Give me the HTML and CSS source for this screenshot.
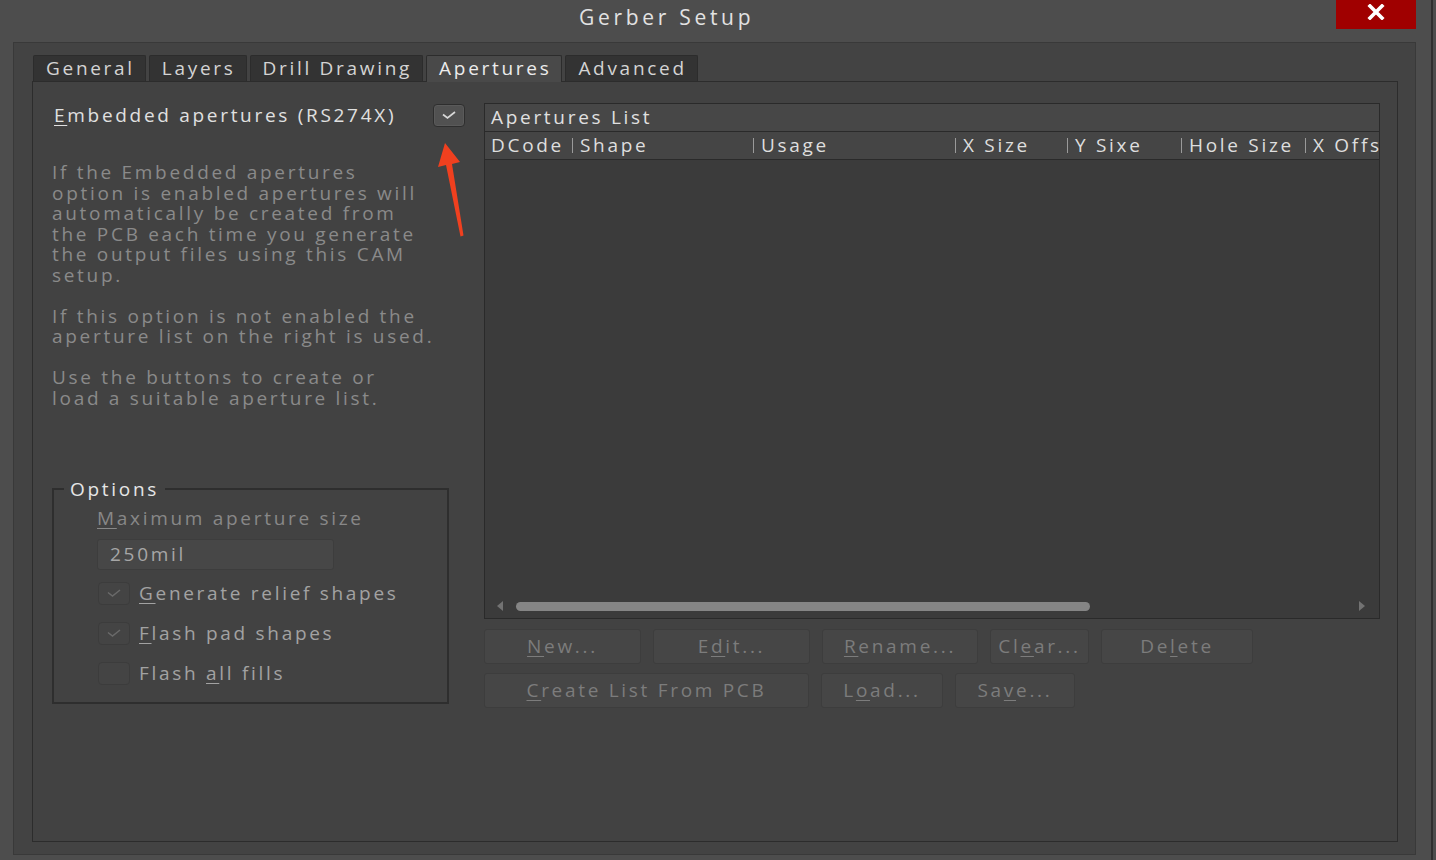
FILE: index.html
```html
<!DOCTYPE html>
<html>
<head>
<meta charset="utf-8">
<title>Gerber Setup</title>
<link rel="stylesheet" href="styles.css">
</head>
<body>
<div class="window">
  <div class="titlebar">
    <span class="title">Gerber Setup</span>
    <button class="close" aria-label="Close">
      <svg width="18" height="16" viewBox="0 0 18 16"><path d="M3 2 L15 14 M15 2 L3 14" stroke="#ffffff" stroke-width="3.6" stroke-linecap="square"/></svg>
    </button>
  </div>
  <div class="frame">
    <div class="tabs">
      <div class="tab">General</div>
      <div class="tab">Layers</div>
      <div class="tab">Drill Drawing</div>
      <div class="tab active">Apertures</div>
      <div class="tab">Advanced</div>
    </div>
    <div class="page">
      <div class="left">
        <div class="embed-row">
          <span class="embed-label"><u>E</u>mbedded apertures (RS274X)</span>
          <span class="check big"><svg width="16" height="10" viewBox="0 0 16 10"><path d="M2 4.5 L6.5 8 L14 2" fill="none" stroke="#d8d8d8" stroke-width="1.7"/></svg></span>
        </div>
        <div class="desc">
          <p>If the Embedded apertures<br>option is enabled apertures will<br>automatically be created from<br>the PCB each time you generate<br>the output files using this CAM<br>setup.</p>
          <p>If this option is not enabled the<br>aperture list on the right is used.</p>
          <p>Use the buttons to create or<br>load a suitable aperture list.</p>
        </div>
        <fieldset class="options">
          <legend>Options</legend>
          <div class="opt-label"><u>M</u>aximum aperture size</div>
          <div class="input">250mil</div>
          <div class="opt-row first">
            <span class="check"><svg width="16" height="10" viewBox="0 0 16 10"><path d="M2 4.5 L6.5 8 L14 2" fill="none" stroke="#6a6a6a" stroke-width="1.5"/></svg></span>
            <span class="opt-text"><u>G</u>enerate relief shapes</span>
          </div>
          <div class="opt-row">
            <span class="check"><svg width="16" height="10" viewBox="0 0 16 10"><path d="M2 4.5 L6.5 8 L14 2" fill="none" stroke="#6a6a6a" stroke-width="1.5"/></svg></span>
            <span class="opt-text"><u>F</u>lash pad shapes</span>
          </div>
          <div class="opt-row">
            <span class="check"></span>
            <span class="opt-text">Flash <u>a</u>ll fills</span>
          </div>
        </fieldset>
      </div>
      <div class="right">
        <div class="list">
          <div class="list-title">Apertures List</div>
          <div class="cols">
            <div class="col c-dcode">DCode</div>
            <div class="col sep c-shape">Shape</div>
            <div class="col sep c-usage">Usage</div>
            <div class="col sep c-xs">X Size</div>
            <div class="col sep c-ys">Y Sixe</div>
            <div class="col sep c-hole">Hole Size</div>
            <div class="col sep c-xo">X Offs</div>
          </div>
          <div class="list-body"></div>
          <div class="hscroll">
            <span class="arrow-l"></span>
            <div class="track"><div class="thumb"></div></div>
            <span class="arrow-r"></span>
          </div>
        </div>
        <div class="btn-row">
          <div class="btn b-new"><u>N</u>ew...</div>
          <div class="btn b-edit">E<u>d</u>it...</div>
          <div class="btn b-rename"><u>R</u>ename...</div>
          <div class="btn b-clear">Cl<u>e</u>ar...</div>
          <div class="btn b-delete">De<u>l</u>ete</div>
        </div>
        <div class="btn-row">
          <div class="btn b-create"><u>C</u>reate List From PCB</div>
          <div class="btn b-load">L<u>o</u>ad...</div>
          <div class="btn b-save">Sa<u>v</u>e...</div>
        </div>
      </div>
    </div>
  </div>
</div>
<svg class="annot" width="1436" height="860" viewBox="0 0 1436 860">
  <polygon points="445,143 438,167 446,165 460.5,236.5 463.5,235.5 452,164 460,162" fill="#f0401f"/>
</svg>
</body>
</html>
```
FILE: styles.css
```css
* { box-sizing: border-box; }
html, body { margin: 0; padding: 0; }
body {
  width: 1436px;
  height: 860px;
  overflow: hidden;
  background: #4d4d4d;
  font-family: "Open Sans", "DejaVu Sans", sans-serif;
  font-size: 19px;
  letter-spacing: 2.7px;
  position: relative;
}
u { text-decoration-thickness: 1px; text-underline-offset: 3px; }
.window {
  width: 1433px;
  height: 860px;
  border-right: 2px solid #2f2f2f;
  display: flex;
  flex-direction: column;
}
.titlebar {
  height: 42px;
  display: flex;
  align-items: flex-start;
  flex: none;
}
.title {
  margin-left: 579px;
  margin-top: 2px;
  color: #e2e2e2;
  font-size: 21px;
  letter-spacing: 3.7px;
  line-height: 30px;
}
.close {
  margin-left: auto;
  margin-right: 15px;
  width: 80px;
  height: 29px;
  background: #a00000;
  border: none;
  padding: 0;
  display: flex;
  align-items: center;
  justify-content: center;
  padding-bottom: 5px;
}
.frame {
  margin: 0 15px 0 13px;
  height: 813px;
  background: #434343;
  border: 1px solid #393939;
  padding: 12px 17px 12px 18px;
  display: flex;
  flex-direction: column;
}
.tabs {
  display: flex;
  gap: 3px;
  padding-left: 1px;
  height: 26px;
  flex: none;
}
.tab {
  height: 26px;
  background: #333333;
  color: #d4d4d4;
  border: 1px solid #2c2c2c;
  border-bottom: none;
  border-radius: 2px 2px 0 0;
  padding: 0 10px 0 12px;
  line-height: 24px;
  white-space: nowrap;
}
.tab.active {
  background: #494949;
  color: #ececec;
  height: 27px;
  margin-bottom: -1px;
  position: relative;
  z-index: 1;
}
.page {
  flex: 1;
  background: #424242;
  border: 1px solid #2c2c2c;
  display: flex;
  padding: 20px 17px 0 19px;
  gap: 18px;
  min-height: 0;
}
.left {
  width: 414px;
  flex: none;
  display: flex;
  flex-direction: column;
}
.embed-row {
  display: flex;
  align-items: center;
  height: 24px;
  margin-top: 1px;
}
.embed-label {
  color: #e0e0e0;
  padding-left: 2px;
  white-space: nowrap;
}
.check {
  width: 32px;
  height: 23px;
  border-radius: 4px;
  background: #444444;
  border: 1px solid #3c3c3c;
  display: flex;
  align-items: center;
  justify-content: center;
  flex: none;
}
.check.big {
  margin-left: auto;
  margin-right: 1px;
  background: #515151;
  border: 1px solid #2e2e2e;
  box-shadow: inset 0 0 0 1px #5a5a5a;
}
.desc {
  margin-top: 35px;
  color: #8a8a8a;
  line-height: 20.5px;
  white-space: nowrap;
}
.desc p { margin: 0 0 20.5px 0; }
.options {
  margin: 49px 0 0 0;
  width: 397px;
  height: 226px;
  border: 2px solid #2e2e2e;
  padding: 0 10px 0 43px;
}
.options legend {
  color: #e6e6e6;
  padding: 0 6px;
  margin-left: -33px;
  line-height: 22px;
}
.opt-label {
  color: #888888;
  line-height: 24px;
  margin-top: 6px;
  white-space: nowrap;
}
.input {
  margin-top: 9px;
  width: 237px;
  height: 31px;
  background: #474747;
  border: 1px solid #3d3d3d;
  border-radius: 3px;
  color: #a6a6a6;
  padding-left: 12px;
  line-height: 29px;
}
.opt-row {
  display: flex;
  align-items: center;
  gap: 9px;
  height: 23px;
  margin-top: 17px;
}
.opt-row.first { margin-top: 12px; }
.opt-row .check { margin-left: 1px; }
.opt-text { color: #a2a2a2; white-space: nowrap; }
.right {
  flex: 1;
  min-width: 0;
  display: flex;
  flex-direction: column;
  gap: 9px;
}
.list {
  height: 516px;
  border: 1px solid #2a2a2a;
  background: #3b3b3b;
  display: flex;
  flex-direction: column;
  margin-top: 1px;
  margin-bottom: 1px;
  overflow: hidden;
}
.list-title {
  height: 28px;
  background: #474747;
  border-bottom: 1px solid #2a2a2a;
  color: #e0e0e0;
  padding-left: 6px;
  line-height: 27px;
  flex: none;
}
.cols {
  height: 28px;
  background: #454545;
  border-bottom: 1px solid #2a2a2a;
  display: flex;
  overflow: hidden;
  color: #dedede;
  line-height: 27px;
  flex: none;
}
.col {
  flex: none;
  display: flex;
  align-items: center;
  white-space: nowrap;
}
.col.sep::before {
  content: "";
  width: 1px;
  height: 15px;
  background: #9a9a9a;
  margin-right: 7px;
}
.c-dcode { width: 87px; padding-left: 6px; }
.c-shape { width: 181px; }
.c-usage { width: 202px; }
.c-xs { width: 112px; }
.c-ys { width: 114px; }
.c-hole { width: 124px; }
.c-xo { width: 120px; }
.list-body { flex: 1; }
.hscroll {
  height: 20px;
  display: flex;
  align-items: center;
  padding: 0 14px 4px 12px;
  flex: none;
}
.arrow-l {
  width: 0; height: 0;
  border-top: 5px solid transparent;
  border-bottom: 5px solid transparent;
  border-right: 6px solid #727272;
}
.arrow-r {
  width: 0; height: 0;
  border-top: 5px solid transparent;
  border-bottom: 5px solid transparent;
  border-left: 6px solid #727272;
}
.track { flex: 1; padding: 0 10px 0 13px; }
.thumb {
  width: 574px;
  height: 9px;
  border-radius: 5px;
  background: #858585;
}
.btn-row {
  display: flex;
  gap: 12px;
}
.btn {
  height: 35px;
  background: #464646;
  border: 1px solid #3d3d3d;
  border-radius: 3px;
  color: #7c7c7c;
  text-align: center;
  line-height: 33px;
  flex: none;
  white-space: nowrap;
}
.b-new { width: 157px; }
.b-edit { width: 157px; }
.b-rename { width: 156px; }
.b-clear { width: 99px; }
.b-delete { width: 152px; }
.b-create { width: 325px; }
.b-load { width: 122px; }
.b-save { width: 120px; }
.annot {
  position: absolute;
  left: 0;
  top: 0;
  pointer-events: none;
}
```
